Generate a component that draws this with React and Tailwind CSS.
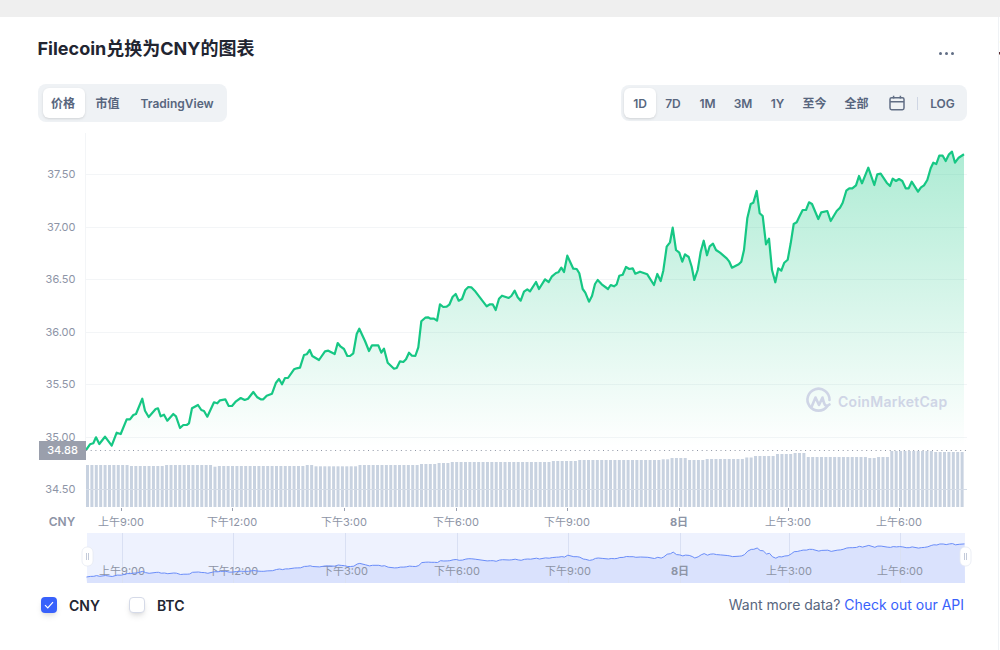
import React from 'react';

const crop = (ox, oy, pts) => pts.map(([x, y]) => [ox + x / 3, oy + y / 3]);

// price line, traced in three stretches
const pricePoints = [
  ...crop(70, 300, [[48,450],[60,433],[70,430],[78,412],[88,432],[105,410],[125,437],[140,398],[152,402],[170,358],[180,358],[190,345],[198,342],[217,296],[225,332],[236,351],[257,327],[264,325],[272,349],[282,344],[292,362],[310,342],[318,349],[330,384],[340,375],[350,375],[357,370],[366,325],[384,315],[394,330],[402,333],[412,350],[432,307],[442,310],[450,301],[466,298],[476,318],[486,318],[498,304],[512,294],[524,300],[534,296],[550,276],[562,292],[572,298],[580,298],[590,287],[606,281],[618,248],[627,237],[636,253],[645,234],[654,234],[672,208],[680,205],[690,203],[702,165],[710,163],[719,150],[727,168],[747,180]]),
  ...crop(320, 230, [[15,364],[25,362],[44,372],[53,339],[62,350],[72,357],[82,378],[90,378],[100,370],[110,312],[118,296],[135,333],[147,363],[156,346],[175,346],[184,368],[192,356],[203,398],[222,416],[230,414],[240,394],[250,396],[258,388],[267,368],[276,377],[286,378],[295,352],[304,274],[316,263],[324,262],[332,266],[342,266],[351,272],[360,223],[370,231],[380,230],[388,224],[398,200],[407,192],[416,212],[426,207],[436,180],[445,171],[454,172],[464,182],[500,229],[510,223],[518,223],[527,240],[537,206],[546,197],[566,204],[574,198],[584,182],[593,202],[602,212],[612,185],[622,178],[630,184],[648,156],[657,177],[675,148],[686,156],[695,140],[708,129],[715,127],[724,113],[732,126],[742,77],[760,116],[770,117],[778,130],[788,177],[796,188],[807,215],[816,198],[825,162],[833,150],[845,163],[864,177],[872,165],[882,169],[890,163],[898,137],[908,134],[918,111],[928,117],[938,115],[946,131]]),
  ...crop(640, 130, [[0,425],[22,433],[42,465],[52,432],[62,453],[70,422],[80,350],[90,337],[98,293],[108,360],[118,368],[127,395],[135,373],[146,381],[155,410],[163,450],[173,420],[182,365],[191,332],[201,376],[209,349],[219,341],[228,360],[240,368],[260,385],[268,395],[276,413],[296,403],[304,395],[312,360],[322,265],[332,222],[340,218],[350,183],[359,250],[368,258],[378,343],[387,326],[396,420],[406,457],[415,415],[424,422],[433,398],[443,389],[452,340],[461,282],[470,277],[480,256],[488,240],[498,240],[507,217],[516,222],[535,267],[544,247],[562,243],[572,273],[590,243],[600,233],[608,218],[619,182],[628,175],[637,175],[648,166],[657,138],[666,160],[685,113],[703,165],[712,133],[722,131],[740,158],[750,168],[758,146],[768,153],[777,147],[787,153],[797,175],[806,175],[815,155],[834,185],[843,172],[852,166],[862,150],[872,115],[880,98],[889,102],[898,77],[908,77],[917,93],[927,73],[936,65],[945,98],[956,83],[972,73]]),
];

const toPath = (pts) => pts.map(([x, y], i) => `${i ? 'L' : 'M'}${x.toFixed(1)} ${y.toFixed(1)}`).join(' ');

const linePath = toPath(pricePoints);
const areaPath = `${linePath} L964 450 L86 450 Z`;

// overview strip is the same line squashed into the navigator
const navPoints = pricePoints.map(([x, y]) => [x + 0.5, 577 - (450 - y) * 0.112]);
const navLine = toPath(navPoints);
const navArea = `${navLine} L965 583 L87 583 Z`;

// [up to x, top of bar]
const volumeSteps = [
  [130, 465], [165, 466], [214, 465], [218, 466.7], [300, 466], [305, 466], [312, 465], [358, 466.3], [418, 465],
  [438, 464], [450, 463], [550, 462], [578, 461], [661, 460], [670, 459.3], [686, 458], [705, 460], [744, 459],
  [755, 457.5], [775, 456], [793, 454], [806, 453], [866, 457], [875, 458], [891, 457], [935, 451], [966, 452],
];

const bars = Array.from({ length: 200 }, (_, i) => {
  const x = 86 + i * 4.395;
  const step = volumeSteps.find(([end]) => x + 1.5 <= end) || volumeSteps[volumeSteps.length - 1];
  return { x, top: step[1] };
});

const gridLines = [174, 227, 279, 332, 384, 437];
const yLabels = [[174, '37.50'], [227, '37.00'], [279, '36.50'], [332, '36.00'], [384, '35.50'], [437, '35.00'], [489, '34.50']];
const ticks = [
  { x: 121.5, label: '上午9:00' },
  { x: 232.5, label: '下午12:00' },
  { x: 344.5, label: '下午3:00' },
  { x: 456.5, label: '下午6:00' },
  { x: 567.5, label: '下午9:00' },
  { x: 679.5, label: '8日', bold: true },
  { x: 788.5, label: '上午3:00' },
  { x: 899.5, label: '上午6:00' },
];

const ranges = [
  { label: '1D', width: 'w-[32px]', active: true },
  { label: '7D', width: 'w-[34px]' },
  { label: '1M', width: 'w-[35px]' },
  { label: '3M', width: 'w-[36px]' },
  { label: '1Y', width: 'w-[33px]' },
  { label: '至今', width: 'w-[41px]' },
  { label: '全部', width: 'w-[43px]' },
];

function Handle({ x }) {
  return (
    <g>
      <rect x={x} y={547} width={11} height={19} rx={5} fill="#fff" stroke="#e4e8f2" strokeWidth={0.75} />
      <path d={`M${x + 4.5} 553 V560 M${x + 6.5} 553 V560`} stroke="#c3cad9" strokeWidth={1} />
    </g>
  );
}

function PriceChart() {
  return (
    <svg viewBox="38 128 960 462" className="block w-[960px] h-[462px] mt-[6px]">
      <defs>
        <linearGradient id="priceFill" gradientUnits="userSpaceOnUse" x1="0" y1="150" x2="0" y2="447">
          <stop offset="0" stopColor="#16c784" stopOpacity="0.35" />
          <stop offset="1" stopColor="#16c784" stopOpacity="0" />
        </linearGradient>
      </defs>

      <path d="M85.5 133 V441" stroke="#f3f5f7" fill="none" />
      {gridLines.map((y) => (
        <path key={y} d={`M86 ${y + 0.5} H967`} stroke="#f3f5f7" fill="none" />
      ))}

      <path d={areaPath} fill="url(#priceFill)" />

      {/* watermark */}
      <g fill="none" stroke="#cfd5e6" strokeWidth="2.6" strokeLinecap="round" strokeLinejoin="round">
        <path d="M827.5 406 A11 11 0 1 1 829.5 400" />
        <path d="M811.5 407 L815.5 397.5 L819 405 L822.5 397.5 L824 403 C825 406 827 406.5 829.5 404.5" />
      </g>
      <text x={838} y={407} fontSize="14" fontWeight="600" letterSpacing="0.28" className="fill-[#cfd5e6]">CoinMarketCap</text>

      <path d={linePath} fill="none" stroke="#16c784" strokeWidth="2.2" strokeLinejoin="round" />

      {bars.map((b) => (
        <rect key={b.x} x={b.x} y={b.top} width={3} height={507 - b.top} fill="#c8d2e0" />
      ))}
      <path d="M86 489.5 H967" stroke="#d5dce7" fill="none" />

      <path d="M86 450.5 H967" stroke="#8f96a5" strokeDasharray="1 3.7" fill="none" />

      {yLabels.map(([y, label]) => (
        <text key={label} x={75.5} y={y + 4} textAnchor="end" fontSize="11" className="fill-[#8d94a6]">{label}</text>
      ))}
      <rect x={39} y={441} width={47} height={19} fill="#9a9fac" />
      <text x={62.5} y={454} textAnchor="middle" fontSize="11" fontWeight="500" className="fill-white">34.88</text>

      {ticks.map((t) => (
        <g key={t.label}>
          <path d={`M${t.x} 508 V511`} stroke="#9aa1b1" fill="none" />
          <text x={t.x - 0.5} y={525.5} textAnchor="middle" fontSize="11" fontWeight={t.bold ? 700 : 400} className="fill-[#8d94a6]">{t.label}</text>
        </g>
      ))}
      <text x={62} y={525.5} textAnchor="middle" fontSize="12" fontWeight="600" className="fill-[#8d94a6]">CNY</text>

      {/* navigator */}
      <rect x={87} y={533} width={878} height={50} fill="#eef2fe" />
      <path d={navArea} fill="#dae2fd" />
      {ticks.map((t) => (
        <path key={t.x} d={`M${t.x + 1} 533 V583`} stroke="#d9e0f3" fill="none" />
      ))}
      {ticks.map((t) => (
        <text key={t.label} x={t.x + 0.5} y={575} textAnchor="middle" fontSize="11" fontWeight={t.bold ? 700 : 400} className="fill-[#8d94a6]">{t.label}</text>
      ))}
      <path d={navLine} fill="none" stroke="#6a8df9" strokeWidth="1" />
      <Handle x={82} />
      <Handle x={960} />
    </svg>
  );
}

export default function App() {
  return (
    <div className="w-[1000px] h-[650px] overflow-hidden bg-white font-['Inter','Noto_Sans_CJK_SC',sans-serif] flex flex-col">
      <div className="h-[17px] shrink-0 bg-[#efefef]" />
      <div className="flex flex-1 min-h-0">
        <div className="w-[998px] pt-[19px]">
          <div className="flex items-center justify-between pl-[37.5px] pr-[44px] h-[24px]">
            <h2 className="pt-px text-[18px] leading-[24px] font-bold text-[#222531]">Filecoin兑换为CNY的图表</h2>
            <div className="flex gap-[3px] mt-[10px]">
              <span className="w-[3px] h-[3px] rounded-full bg-[#616e85]" />
              <span className="w-[3px] h-[3px] rounded-full bg-[#616e85]" />
              <span className="w-[3px] h-[3px] rounded-full bg-[#616e85]" />
            </div>
          </div>

          <div className="flex items-center justify-between pl-[38px] pr-[31px] mt-[24px] h-[38px] text-[12px] font-semibold text-[#58667e]">
            <div className="flex h-[38px] pl-[5px] pr-[3px] py-[4px] rounded-lg bg-[#eff2f5]">
              <button className="w-[42px] h-[30px] pt-px pr-[2px] rounded-md bg-white shadow-sm">价格</button>
              <button className="px-[10.5px] pt-px">市值</button>
              <button className="px-[10.5px] pt-px">TradingView</button>
            </div>

            <div className="flex items-center w-[346px] h-[36px] pl-[3px] rounded-lg bg-[#eff2f5]">
              {ranges.map((r) => (
                <button
                  key={r.label}
                  className={`${r.width} h-[30px] pt-px rounded-md ${r.active ? 'bg-white shadow-sm' : ''}`}
                >
                  {r.label}
                </button>
              ))}
              <button className="w-[38px] flex justify-center">
                <svg width="16" height="16" viewBox="0 0 16 16" fill="none" stroke="#616e85" strokeWidth="1.5">
                  <rect x="1" y="2.7" width="14" height="12" rx="1.6" />
                  <path d="M1 6.7 H15 M4.6 0.8 V3.6 M11.4 0.8 V3.6" />
                </svg>
              </button>
              <span className="w-px h-[13px] ml-px bg-[#cfd6e4]" />
              <button className="w-[48px] pt-px pl-px">LOG</button>
            </div>
          </div>

          <div className="pl-[38px]">
            <PriceChart />
          </div>

          <div className="flex items-center justify-between pl-[41px] pr-[34px] mt-[5px] h-[20px]">
            <div className="flex items-center text-[14px] font-semibold text-[#222531]">
              <span className="w-[16px] h-[16px] rounded-[4px] bg-[#3861fb] shadow-md flex items-center justify-center">
                <svg width="12" height="12" viewBox="0 0 12 12" fill="none" stroke="#fff" strokeWidth="1.2">
                  <path d="M2 6.2 L4.8 9 L10 3.2" />
                </svg>
              </span>
              <span className="ml-[12px]">CNY</span>
              <span className="w-[16px] h-[16px] ml-[29px] rounded-[4px] bg-white border border-[#d5dae8] shadow-md" />
              <span className="ml-[12px]">BTC</span>
            </div>
            <p className="-mt-px text-[14px] text-[#58667e]">
              Want more data? <span className="text-[#3861fb]">Check out our API</span>
            </p>
          </div>
        </div>

        {/* edge of the next card */}
        <div className="w-[2px] border-l border-[#eff2f5] overflow-hidden pt-[19px]">
          <p className="text-[18px] leading-[24px] font-bold text-[#222531] whitespace-nowrap -ml-[1px]">二</p>
        </div>
      </div>
    </div>
  );
}
